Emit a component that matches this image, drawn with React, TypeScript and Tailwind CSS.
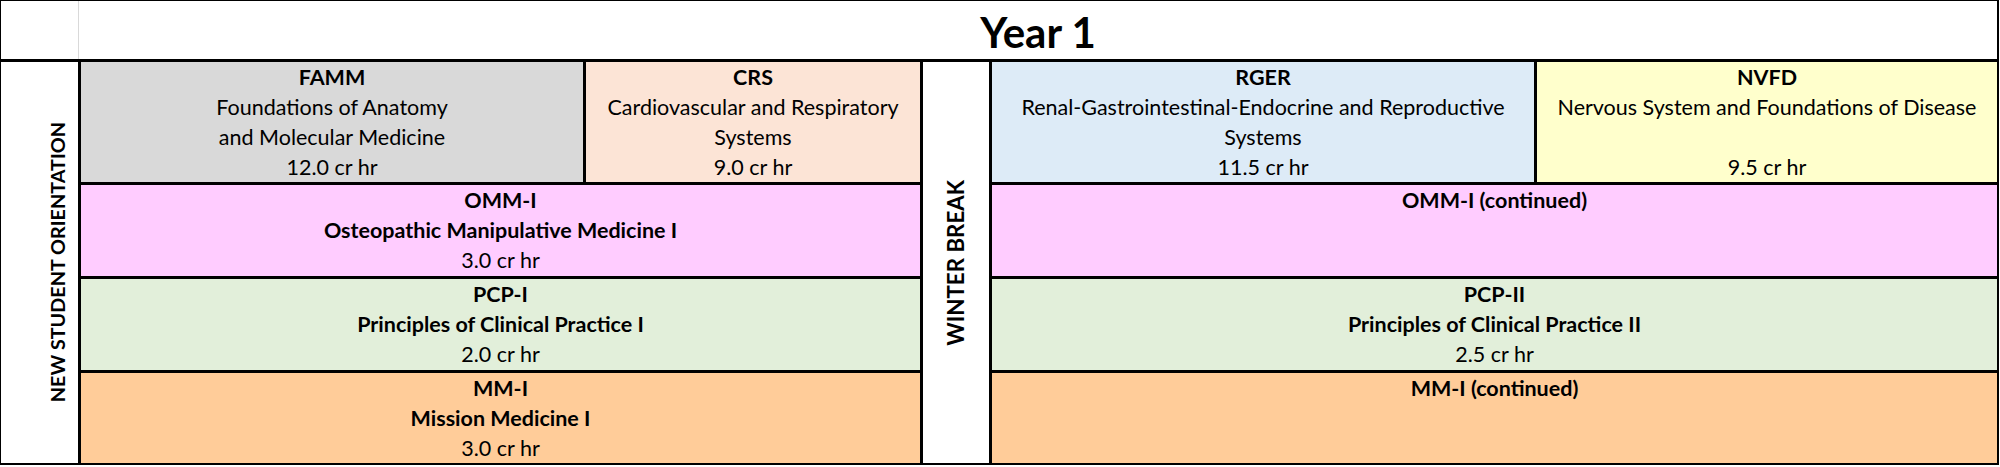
type Line = { t: string; b?: boolean };

function Cell({ lines, className }: { lines: Line[]; className: string }) {
  return (
    <div className={`flex flex-col items-center text-[21.5px] leading-[30px] text-black ${className}`}>
      {lines.map((l, i) => (
        <div key={i} className={`h-[30px] whitespace-nowrap ${l.b ? "font-bold" : ""}`}>
          {l.t}
        </div>
      ))}
    </div>
  );
}

export default function App() {
  return (
    <div className="w-[1999px] bg-white font-[Lato,sans-serif] text-black">
      {/* title row */}
      <div className="flex h-[59px] border-t border-l border-r-2 border-black">
        <div className="w-[78px] border-r border-[#d9d9d9]" />
        <div className="flex flex-1 items-center justify-center pt-[4px] text-[42px] font-bold">Year 1</div>
      </div>

      {/* schedule grid */}
      <div className="grid grid-cols-[77px_502px_334px_66px_542px_460px] grid-rows-[120px_91px_91px_90px] gap-[3px] bg-black pt-[3px] pl-px pr-[2px] pb-[2px]">
        <div className="row-span-4 flex items-center justify-end bg-white pr-[10px]">
          <span className="rotate-180 text-[19.8px] font-bold leading-none [writing-mode:vertical-rl]">
            NEW STUDENT ORIENTATION
          </span>
        </div>

        <Cell
          className="bg-[#d9d9d9]"
          lines={[{ t: "FAMM", b: true }, { t: "Foundations of Anatomy" }, { t: "and Molecular Medicine" }, { t: "12.0 cr hr" }]}
        />
        <Cell
          className="bg-[#fce4d6]"
          lines={[{ t: "CRS", b: true }, { t: "Cardiovascular and Respiratory" }, { t: "Systems" }, { t: "9.0 cr hr" }]}
        />

        <div className="row-span-4 flex items-center justify-center bg-white">
          <span className="rotate-180 text-[22.3px] font-bold leading-none [writing-mode:vertical-rl]">WINTER BREAK</span>
        </div>

        <Cell
          className="bg-[#ddebf7]"
          lines={[
            { t: "RGER", b: true },
            { t: "Renal-Gastrointestinal-Endocrine and Reproductive" },
            { t: "Systems" },
            { t: "11.5 cr hr" },
          ]}
        />
        <Cell
          className="bg-[#ffffcc]"
          lines={[{ t: "NVFD", b: true }, { t: "Nervous System and Foundations of Disease" }, { t: "" }, { t: "9.5 cr hr" }]}
        />

        <Cell
          className="col-span-2 bg-[#ffccff]"
          lines={[{ t: "OMM-I", b: true }, { t: "Osteopathic Manipulative Medicine I", b: true }, { t: "3.0 cr hr" }]}
        />
        <Cell className="col-span-2 bg-[#ffccff]" lines={[{ t: "OMM-I (continued)", b: true }]} />

        <Cell
          className="col-span-2 bg-[#e2efda]"
          lines={[{ t: "PCP-I", b: true }, { t: "Principles of Clinical Practice I", b: true }, { t: "2.0 cr hr" }]}
        />
        <Cell
          className="col-span-2 bg-[#e2efda]"
          lines={[{ t: "PCP-II", b: true }, { t: "Principles of Clinical Practice II", b: true }, { t: "2.5 cr hr" }]}
        />

        <Cell
          className="col-span-2 bg-[#ffcc99]"
          lines={[{ t: "MM-I", b: true }, { t: "Mission Medicine I", b: true }, { t: "3.0 cr hr" }]}
        />
        <Cell className="col-span-2 bg-[#ffcc99]" lines={[{ t: "MM-I (continued)", b: true }]} />
      </div>
    </div>
  );
}
